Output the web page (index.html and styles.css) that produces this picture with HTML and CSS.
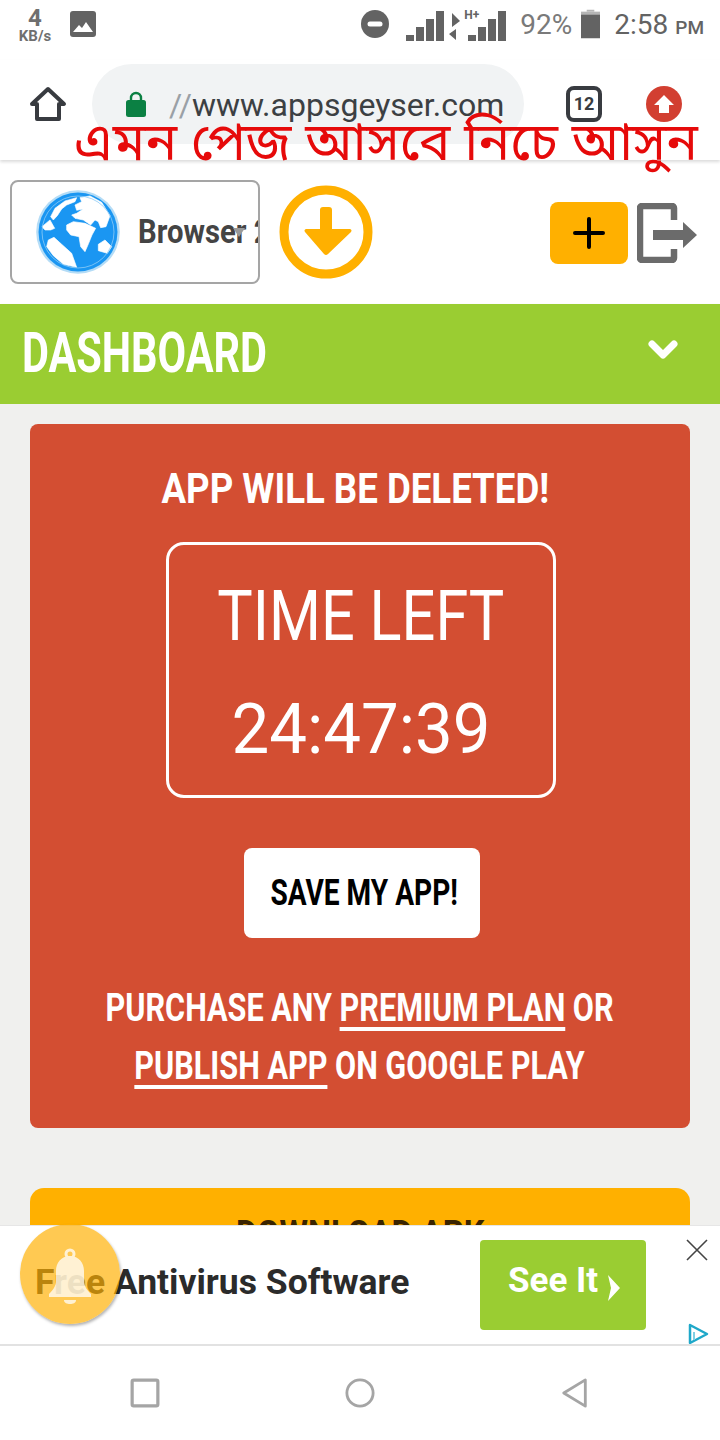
FILE: index.html
```html
<!DOCTYPE html>
<html lang="en">
<head>
<meta charset="utf-8">
<title>Dashboard</title>
<link rel="stylesheet" href="styles.css">
</head>
<body>
<div class="screen">
  <div class="status">
    <div class="status-left">
      <div class="speed"><span class="speed-num">4</span><span class="speed-unit">KB/s</span></div>
      <svg class="pic" viewBox="0 0 26 26"><rect width="26" height="26" rx="3" fill="#636363"/><path d="M3 21l6-7 3 3 4-6 7 10z" fill="#fff"/></svg>
    </div>
    <div class="status-right">
      <svg class="dnd" viewBox="0 0 28 28"><circle cx="14" cy="14" r="14" fill="#636363"/><rect x="6.5" y="11.5" width="15" height="5" rx="2.5" fill="#fff"/></svg>
      <svg class="signal" viewBox="0 0 100 30"><path d="M0 24h8v6H0zM10 16h8v14h-8zM20 8h8v22h-8zM30 0h8v30h-8z" fill="#636363"/><path d="M46 2l8 8-8 6zM50 18v11l-7-6z" fill="#636363"/><path d="M62 24h8v6h-8zM72 16h8v14h-8zM82 8h8v22h-8zM92 0h8v30h-8z" fill="#636363"/></svg>
      <span class="hplus">H+</span>
      <span class="battery-text">92%</span>
      <svg class="battery" viewBox="0 0 20 30"><path d="M6 0h8v2h-8z" fill="#b5b5b5"/><path d="M0 2h20v3H0z" fill="#b5b5b5"/><path d="M0 5h20v25H0z" fill="#636363"/></svg>
      <span class="clock">2:58 <small>PM</small></span>
    </div>
  </div>

  <div class="toolbar">
    <svg class="home" viewBox="0 0 38 36"><path d="M3 18L19 3l16 15h-5v15H8V18z" fill="none" stroke="#383b40" stroke-width="4" stroke-linejoin="round"/></svg>
    <div class="url">
      <svg class="lock" viewBox="0 0 20 26"><path d="M5 11V7a5 5 0 0 1 10 0v4" fill="none" stroke="#0b8043" stroke-width="2.4"/><rect y="9" width="20" height="17" rx="2.5" fill="#0b8043"/></svg>
      <span class="url-text"><span class="scheme">//</span>www.appsgeyser.com</span>
    </div>
    <div class="tabs">12</div>
    <svg class="upload" viewBox="0 0 36 36"><circle cx="18" cy="18" r="18" fill="#d23f31"/><path d="M18 9l10 10h-5v8H13v-8H8z" fill="#fff"/></svg>
  </div>

  <div class="app-header">
    <div class="app-select">
      <svg class="globe" viewBox="0 0 84 84">
        <circle cx="42" cy="42" r="41.8" fill="#b4dcf6"/>
        <circle cx="42" cy="42" r="39.5" fill="#1a96f2"/>
        <g transform="translate(-6 -5) scale(.3333)" fill="#fff" stroke="#fff" stroke-width="2" stroke-linejoin="round">
          <path d="M62 95L75 70 105 48 140 38 135 50 110 60 95 72 82 92 70 105z"/>
          <path d="M150 38L180 33 215 52 240 92 228 125 212 128 205 110 195 105 182 120 160 105 135 100 125 90 140 85 160 72 140 76 135 60 155 50z"/>
          <path d="M110 120L130 110 165 115 197 130 186 150 176 175 165 200 152 185 147 155 122 150 110 135z"/>
          <path d="M55 165L72 157 95 178 125 205 140 247 100 238 70 212 50 185z"/>
          <path d="M36 125L60 105 74 130 62 135 45 135z"/>
          <path d="M205 178L225 165 245 185 232 205 205 197z"/>
        </g>
        <circle cx="42" cy="42" r="36" fill="none" stroke="#8fcbf5" stroke-width=".8"/>
      </svg>
      <span class="app-name">Browser 2</span>
      <span class="caret"></span>
    </div>
    <svg class="download" viewBox="0 0 94 94"><circle cx="47" cy="47" r="42" fill="none" stroke="#ffb000" stroke-width="9"/><path d="M41 22a3 3 0 0 1 3-3h6a3 3 0 0 1 3 3v19h18a2 2 0 0 1 1 3L49 66a3 3 0 0 1-4 0L26 44a2 2 0 0 1 1-3h14z" fill="#ffb000" transform="translate(0 3)"/></svg>
    <div class="spacer"></div>
    <div class="add">
      <svg class="plus" viewBox="0 0 32 32"><path d="M16 2v28M2 16h28" stroke="#000" stroke-width="4" stroke-linecap="round"/></svg>
    </div>
    <svg class="logout" viewBox="0 0 60 60"><path d="M37 17V5a2 2 0 0 0-2-2H5a2 2 0 0 0-2 2v50a2 2 0 0 0 2 2h30a2 2 0 0 0 2-2V46" fill="none" stroke="#6b6b6b" stroke-width="6.5"/><path d="M16 27h30V19l14 13-14 13v-8H16z" fill="#6b6b6b"/></svg>
  </div>

  <div class="dash-bar">
    <span class="dash-title">DASHBOARD</span>
    <svg class="chev" viewBox="0 0 30 20"><path d="M4 4l11 11L26 4" fill="none" stroke="#fff" stroke-width="7" stroke-linecap="round" stroke-linejoin="round"/></svg>
  </div>

  <main class="content">
    <section class="warn-card">
      <h2 class="warn-title">APP WILL BE DELETED!</h2>
      <div class="timer">
        <div class="timer-label">TIME LEFT</div>
        <div class="timer-value">24:47:39</div>
      </div>
      <button class="save"><span class="save-text">SAVE MY APP!</span></button>
      <p class="purchase">PURCHASE ANY <u>PREMIUM PLAN</u> OR<br><u>PUBLISH APP</u> ON GOOGLE PLAY</p>
    </section>
    <div class="dl-apk"><span class="dl-text">DOWNLOAD APK</span></div>
  </main>

  <div class="caption">এমন পেজ আসবে নিচে আসুন</div>

  <aside class="ad">
    <span class="ad-text">Free Antivirus Software</span>
    <div class="ad-btn">See It <svg class="ad-chev" viewBox="0 0 14 26"><path d="M1 0l12 13L1 26l3-13z" fill="#fff"/></svg></div>
    <svg class="ad-x" viewBox="0 0 22 22"><path d="M1 1l20 20M21 1L1 21" stroke="#444" stroke-width="1.6"/></svg>
    <svg class="ad-info" viewBox="0 0 22 22"><path d="M3 2l17 9-17 9z" fill="none" stroke="#1fa8c9" stroke-width="2.5" stroke-linejoin="round"/><path d="M7 9v8" stroke="#7fcfe3" stroke-width="2"/></svg>
  </aside>

  <div class="bell">
    <svg class="bell-icon" viewBox="0 0 44 56"><circle cx="22" cy="6" r="4" fill="none" stroke="#fff" stroke-width="3"/><path d="M22 8c-9 0-14 7-14 15v10c0 5-3 9-7 13v3h42v-3c-4-4-7-8-7-13V23c0-8-5-15-14-15z" fill="#fff"/><path d="M16 52h12c0 3-3 4-6 4s-6-1-6-4z" fill="#fff"/></svg>
  </div>

  <nav class="navbar">
    <svg class="nav-icon" viewBox="0 0 28 28"><rect x="2" y="2" width="24" height="24" rx="1.5" fill="none" stroke="#a5a5a5" stroke-width="3"/></svg>
    <svg class="nav-icon" viewBox="0 0 32 32"><circle cx="16" cy="16" r="14" fill="none" stroke="#a5a5a5" stroke-width="3"/></svg>
    <svg class="nav-icon" viewBox="0 0 28 32"><path d="M25 2v28L2 16z" fill="none" stroke="#a5a5a5" stroke-width="3" stroke-linejoin="round"/></svg>
  </nav>
</div>
</body>
</html>
```

FILE: styles.css
```css
* { box-sizing: border-box; }
html, body { margin: 0; padding: 0; }
body { width: 720px; height: 1440px; overflow: hidden; background: #fff; font-family: Roboto, sans-serif; }
.screen { position: relative; width: 720px; height: 1440px; overflow: hidden; display: flex; flex-direction: column; }

.status { height: 60px; flex: none; display: flex; justify-content: space-between; padding: 8px 16px 0 18px; }
.status-left { display: flex; gap: 18px; align-items: flex-start; }
.speed { display: flex; flex-direction: column; align-items: center; color: #6f6f6f; font-weight: 700; width: 34px; }
.speed-num { font-size: 24px; line-height: 21px; }
.speed-unit { font-size: 15px; line-height: 14px; white-space: nowrap; }
.pic { width: 26px; height: 26px; margin-top: 3px; }
.status-right { position: relative; display: flex; align-items: flex-start; color: #7a7a7a; }
.dnd { width: 28px; height: 28px; margin: 2px 17px 0 0; }
.signal { width: 100px; height: 30px; margin: 3px 14px 0 0; }
.hplus { position: absolute; left: 103px; top: 1px; font-size: 12px; font-weight: 700; color: #636363; background: #fff; line-height: 13px; }
.battery-text { font-size: 28px; line-height: 34px; width: 52px; margin-right: 9px; white-space: nowrap; }
.battery { width: 19px; height: 30px; margin: 1px 14px 0 0; }
.clock { font-size: 28px; line-height: 34px; color: #636363; white-space: nowrap; }
.clock small { font-size: 19px; font-weight: 500; }

.toolbar { height: 100px; flex: none; display: flex; align-items: flex-start; padding-top: 4px; position: relative; box-shadow: 0 2px 3px rgba(0, 0, 0, .14); z-index: 1; background: #fff; }
.home { width: 38px; height: 36px; margin: 22px 0 0 29px; }
.url { width: 432px; height: 80px; margin-left: 25px; border-radius: 40px; background: #f1f3f4; display: flex; align-items: flex-start; padding: 26px 0 0 34px; }
.lock { width: 20px; height: 26px; margin-top: 1px; }
.url-text { font-size: 32px; line-height: 30px; color: #3c4043; margin-left: 23px; white-space: nowrap; }
.scheme { color: #9aa0a6; }
.tabs { width: 36px; height: 36px; margin: 22px 0 0 42px; border: 4px solid #383b40; border-radius: 8px; font-weight: 700; font-size: 18px; line-height: 28px; color: #383b40; text-align: center; }
.upload { width: 36px; height: 36px; margin: 22px 0 0 44px; }

.app-header { height: 144px; flex: none; display: flex; align-items: flex-start; padding: 20px 23px 0 10px; }
.app-select { position: relative; width: 250px; height: 104px; border: 2px solid #a5a5a5; border-radius: 8px; display: flex; align-items: flex-start; overflow: hidden; padding: 8px 0 0 24px; }
.globe { width: 84px; height: 84px; flex: none; }
.app-name { flex: none; font-weight: 700; font-size: 34px; line-height: 40px; color: #444; margin: 21px 0 0 18px; white-space: nowrap; transform: scaleX(.86); transform-origin: left center; }
.caret { position: absolute; left: 221px; top: 46px; border: 6px solid transparent; border-top: 9px solid #999; border-bottom: 0; }
.download { width: 94px; height: 94px; margin: 5px 0 0 19px; }
.spacer { flex: 1; }
.add { width: 78px; height: 62px; margin-top: 22px; border-radius: 8px; background: #ffb000; display: flex; align-items: center; justify-content: center; }
.plus { width: 32px; height: 32px; }
.logout { width: 60px; height: 60px; margin: 23px 0 0 9px; }

.dash-bar { height: 100px; flex: none; background: #9acd32; display: flex; align-items: center; justify-content: space-between; padding: 0 42px 0 22px; box-shadow: 0 1px 2px rgba(0, 0, 0, .15); }
.dash-title { font-weight: 700; font-size: 56px; line-height: 1; color: #fff; white-space: nowrap; transform: translateY(-1px) scaleX(.74); transform-origin: left center; }
.chev { width: 30px; height: 20px; margin-top: -8px; }

.content { flex: 1; background: #f0f0ee; padding: 20px 30px 0; }
.warn-card { height: 704px; background: #d34e32; border-radius: 8px; display: flex; flex-direction: column; align-items: center; padding-top: 40px; color: #fff; font-weight: 700; }
.warn-title { margin: 0 9px 0 0; font-size: 42px; line-height: 50px; font-weight: 700; white-space: nowrap; transform: scaleX(.872); }
.timer { width: 390px; height: 256px; margin: 28px 0 0 2px; border: 3px solid #fff; border-radius: 18px; display: flex; flex-direction: column; align-items: center; font-weight: 400; }
.timer-label { font-size: 70px; line-height: 70px; margin-top: 36px; white-space: nowrap; transform: scaleX(.85); }
.timer-value { font-size: 70px; line-height: 70px; margin-top: 43px; white-space: nowrap; transform: scaleX(.96); }
.save { width: 236px; height: 90px; margin: 50px 0 0 4px; border: 0; border-radius: 8px; background: #fff; color: #000; font-family: Roboto, sans-serif; font-weight: 700; font-size: 36px; line-height: 1; padding: 0 9px 0 0; white-space: nowrap; }
.save-text { display: inline-block; transform: scaleX(.78); }
.purchase { margin: 41px 0 0 0; font-size: 39px; line-height: 58px; text-align: center; white-space: nowrap; transform: scaleX(.785); }
.purchase u { text-decoration-thickness: 4px; text-underline-offset: 6px; }
.dl-apk { height: 120px; margin-top: 60px; background: #ffb000; border-radius: 14px 14px 0 0; text-align: center; font-weight: 700; font-size: 37px; line-height: 1; padding-top: 27px; color: #3a2400; }
.dl-text { display: inline-block; transform: scaleX(.88); white-space: nowrap; }

.caption { position: absolute; left: 74px; top: 121px; z-index: 2; font-family: "Noto Sans Bengali", "Lohit Bengali", "Noto Sans", sans-serif; font-size: 53px; line-height: 52px; color: #e60a0a; white-space: nowrap; }

.ad { position: absolute; left: 0; top: 1225px; width: 720px; height: 119px; background: #fff; border-top: 1px solid #e6e6e6; z-index: 2; }
.ad-text { position: absolute; left: 35px; top: 36px; font-weight: 700; font-size: 35.5px; line-height: 40px; color: #2b2b2b; white-space: nowrap; }
.ad-btn { position: absolute; left: 480px; top: 14px; width: 166px; height: 90px; border-radius: 4px; background: #9acd32; color: #fff; font-weight: 700; font-size: 35px; line-height: 82px; padding-left: 28px; white-space: nowrap; }
.ad-chev { width: 14px; height: 26px; vertical-align: -9px; }
.ad-x { position: absolute; left: 686px; top: 13px; width: 22px; height: 22px; }
.ad-info { position: absolute; left: 687px; top: 97px; width: 22px; height: 22px; }

.bell { position: absolute; left: 20px; top: 1224px; width: 100px; height: 100px; border-radius: 50%; background: rgba(255, 176, 0, .68); box-shadow: 1px 2px 3px rgba(0, 0, 0, .3); z-index: 3; display: flex; justify-content: center; padding-top: 24px; }
.bell-icon { width: 44px; height: 56px; opacity: .75; }

.navbar { position: absolute; left: 0; top: 1344px; width: 720px; height: 96px; background: #fff; border-top: 2px solid #e2e2e2; display: flex; padding: 32px 130px 0; justify-content: space-between; z-index: 2; }
.nav-icon { width: 30px; height: 30px; }
```
